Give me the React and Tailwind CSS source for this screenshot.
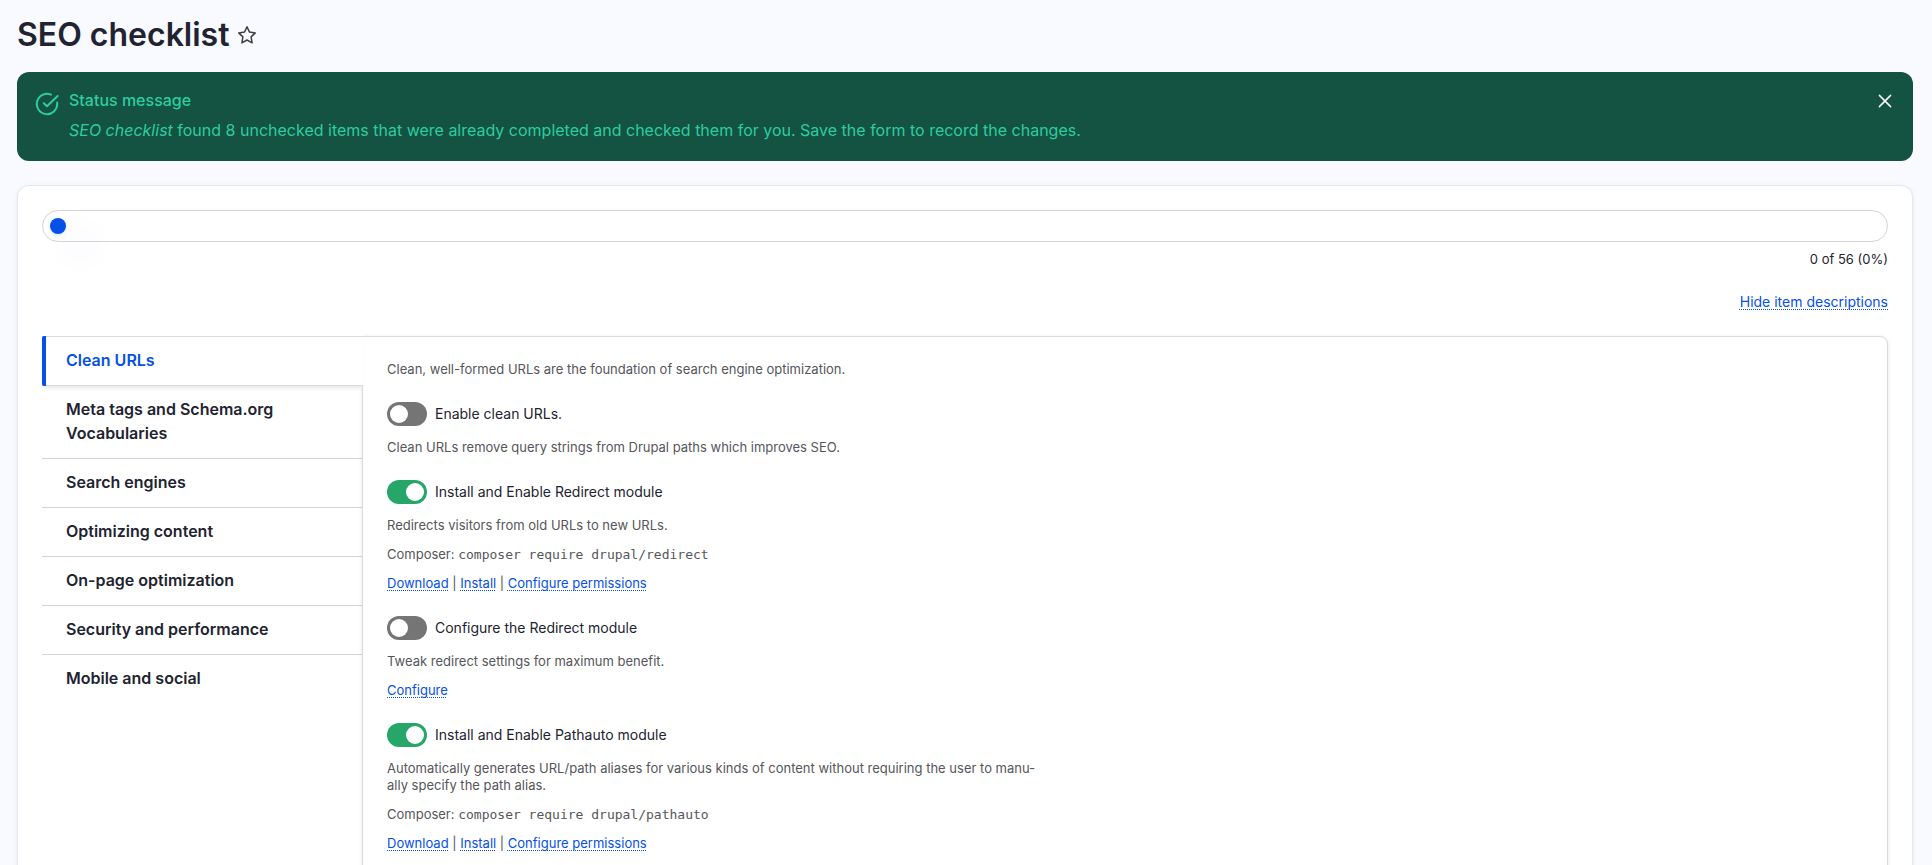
import { useState } from 'react';

const TABS = [
  'Clean URLs',
  'Meta tags and Schema.org Vocabularies',
  'Search engines',
  'Optimizing content',
  'On-page optimization',
  'Security and performance',
  'Mobile and social'
];

const ITEMS = [
  {
    id: 'clean-urls',
    title: 'Enable clean URLs.',
    description: 'Clean URLs remove query strings from Drupal paths which improves SEO.'
  },
  {
    id: 'redirect',
    title: 'Install and Enable Redirect module',
    description: 'Redirects visitors from old URLs to new URLs.',
    composer: 'composer require drupal/redirect',
    links: ['Download', 'Install', 'Configure permissions'],
    done: true
  },
  {
    id: 'redirect-config',
    title: 'Configure the Redirect module',
    description: 'Tweak redirect settings for maximum benefit.',
    links: ['Configure']
  },
  {
    id: 'pathauto',
    title: 'Install and Enable Pathauto module',
    description:
      'Automatically generates URL/path aliases for various kinds of content without requiring the user to manu\u00adally specify the path alias.',
    composer: 'composer require drupal/pathauto',
    links: ['Download', 'Install', 'Configure permissions'],
    done: true
  }
];

const linkClass =
  'text-[#0550e6] underline decoration-dotted decoration-1 underline-offset-2 [text-decoration-skip-ink:none] hover:decoration-solid';

function StatusMessage({ onClose }) {
  return (
    <div
      role="status"
      className="mt-[14px] flex items-start rounded-xl bg-[#145242] pt-4 pr-[15px] pb-[19px] pl-[18px] text-base leading-6 text-[#2ecc9f]"
    >
      <svg
        viewBox="0 0 24 24"
        className="mt-1 size-6 shrink-0"
        fill="none"
        stroke="currentColor"
        strokeWidth="2"
        strokeLinecap="round"
        strokeLinejoin="round"
        aria-hidden="true"
      >
        <path d="M22.2 10.4v1.2A10.2 10.2 0 1 1 16 2.6" />
        <path d="M22.6 4 12 14.3l-3.2-3.1" />
      </svg>
      <div className="ml-[10px] flex-1">
        <h2 className="font-medium">Status message</h2>
        <p className="mt-[6px]">
          <em>SEO checklist</em> found 8 unchecked items that were already completed and checked them
          for you. Save the form to record the changes.
        </p>
      </div>
      <button type="button" onClick={onClose} aria-label="Close message" className="p-1 text-white">
        <svg viewBox="0 0 18 18" className="size-[18px]" stroke="currentColor" strokeWidth="1.5" strokeLinecap="round">
          <path d="M3.4 3.4l11.2 11.2M14.6 3.4L3.4 14.6" />
        </svg>
      </button>
    </div>
  );
}

function ChecklistItem({ item, showDescription }) {
  const [checked, setChecked] = useState(Boolean(item.done));

  return (
    <div className="mt-6">
      <div className="flex items-center gap-2">
        <input
          id={item.id}
          type="checkbox"
          checked={checked}
          onChange={(e) => setChecked(e.target.checked)}
          className="h-6 w-10 shrink-0 appearance-none rounded-full bg-[#757575] p-[3px] before:block before:size-[18px] before:rounded-full before:bg-white checked:bg-[#26a769] checked:before:ml-4"
        />
        <label htmlFor={item.id} className="text-sm leading-6 text-[#222330]">
          {item.title}
        </label>
      </div>
      {showDescription && (
        <div className="mt-[13px] flex max-w-[656px] flex-col gap-3 text-[13px] leading-[17px] text-[#55565b]">
          <p>{item.description}</p>
          {item.composer && (
            <p>
              Composer: <code className="font-['DejaVu_Sans_Mono',monospace] text-[13px]">{item.composer}</code>
            </p>
          )}
          {item.links && (
            <p>
              {item.links.map((link, i) => (
                <span key={link}>
                  {i > 0 && ' | '}
                  <a href="#" className={linkClass}>
                    {link}
                  </a>
                </span>
              ))}
            </p>
          )}
        </div>
      )}
    </div>
  );
}

export default function App() {
  const [active, setActive] = useState(0);
  const [showMessage, setShowMessage] = useState(true);
  const [showDescriptions, setShowDescriptions] = useState(true);

  const toggleDescriptions = (e) => {
    e.preventDefault();
    setShowDescriptions(!showDescriptions);
  };

  return (
    <div className="h-screen overflow-hidden bg-[#f9faff] pt-3 pr-[19px] pl-[17px] font-['Inter',sans-serif] text-[#222330]">
      <header className="flex items-center gap-2">
        <h1 className="text-[32px] leading-[46px] font-semibold">SEO checklist</h1>
        <button type="button" aria-label="Add to shortcuts">
          <svg viewBox="0 0 20 20" className="size-5" fill="none" stroke="#3f3f46" strokeWidth="1.5" strokeLinejoin="round">
            <path d="M10 1.8l2.5 5.3 5.8.8-4.2 4 1 5.9-5.1-2.8-5.1 2.8 1-5.9-4.2-4 5.8-.8z" />
          </svg>
        </button>
      </header>

      {showMessage && <StatusMessage onClose={() => setShowMessage(false)} />}

      <main className="mt-6 rounded-xl border border-[#e6e7ec] bg-white p-6 pb-24 shadow-[0_1px_4px_rgba(20,45,82,0.08)]">
        <div className="flex h-8 items-center rounded-full border border-[#d4d4d8] px-[7px]">
          <div className="size-4 rounded-full bg-[#0550e6] shadow-[0_2px_4px_rgba(5,80,230,0.12),22px_18px_20px_16px_rgba(5,80,230,0.01)]" />
        </div>
        <p className="mt-[9px] text-right text-[13px] leading-[17px]">0 of 56 (0%)</p>
        <p className="mt-[23px] text-right text-sm leading-[22px]">
          <a href="#" onClick={toggleDescriptions} className={linkClass}>
            {showDescriptions ? 'Hide item descriptions' : 'Show item descriptions'}
          </a>
        </p>

        <div className="mt-[23px] flex">
          <nav className="flex w-80 shrink-0 flex-col">
            {TABS.map((tab, i) => (
              <button
                key={tab}
                type="button"
                onClick={() => setActive(i)}
                className={
                  i === active
                    ? 'relative z-10 -mr-px border-y border-[#d9dae0] bg-white px-6 pt-[11px] pb-[13px] text-left leading-6 font-semibold text-[#0550e6] shadow-[0_4px_4px_-2px_rgba(0,0,0,0.1)] before:absolute before:-inset-y-px before:left-0 before:w-1 before:rounded-l-xs before:bg-[#0550e6]'
                    : 'border-b border-[#d4d4d8] px-6 pt-[11px] pb-[13px] text-left leading-6 font-semibold last:border-b-0'
                }
              >
                {tab}
              </button>
            ))}
          </nav>
          <section className="flex-1 rounded-r-lg rounded-bl-lg border border-[#d9dae0] bg-white px-6 pt-6 pb-12 shadow-[0_1px_4px_rgba(0,0,0,0.1)]">
            <p className="text-[13px] leading-[17px] text-[#55565b]">
              Clean, well-formed URLs are the foundation of search engine optimization.
            </p>
            {ITEMS.map((item) => (
              <ChecklistItem key={item.id} item={item} showDescription={showDescriptions} />
            ))}
          </section>
        </div>
      </main>
    </div>
  );
}
